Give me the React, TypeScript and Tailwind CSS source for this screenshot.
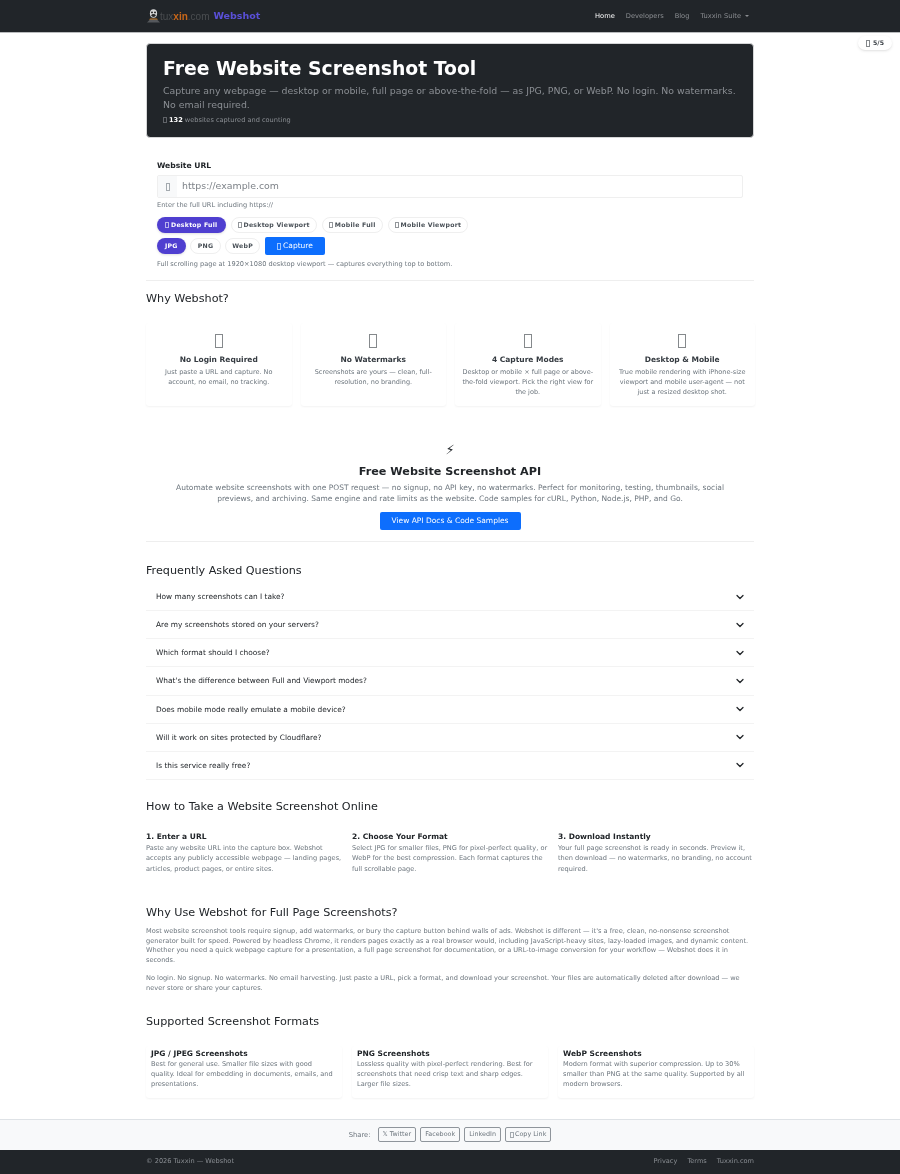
// Webshot landing page: hero, capture form, feature cards, API promo, FAQ and how-to copy.
import type { ReactNode } from "react";
import { ChevronDown } from "lucide-react";

const features = [
  { title: "No Login Required", text: "Just paste a URL and capture. No account, no email, no tracking." },
  { title: "No Watermarks", text: "Screenshots are yours — clean, full-resolution, no branding." },
  { title: "4 Capture Modes", text: "Desktop or mobile × full page or above-the-fold viewport. Pick the right view for the job." },
  { title: "Desktop & Mobile", text: "True mobile rendering with iPhone-size viewport and mobile user-agent — not just a resized desktop shot." },
];

const faqs = [
  "How many screenshots can I take?",
  "Are my screenshots stored on your servers?",
  "Which format should I choose?",
  "What's the difference between Full and Viewport modes?",
  "Does mobile mode really emulate a mobile device?",
  "Will it work on sites protected by Cloudflare?",
  "Is this service really free?",
];

const steps = [
  { title: "1. Enter a URL", text: "Paste any website URL into the capture box. Webshot accepts any publicly accessible webpage — landing pages, articles, product pages, or entire sites." },
  { title: "2. Choose Your Format", text: "Select JPG for smaller files, PNG for pixel-perfect quality, or WebP for the best compression. Each format captures the full scrollable page." },
  { title: "3. Download Instantly", text: "Your full page screenshot is ready in seconds. Preview it, then download — no watermarks, no branding, no account required." },
];

const formats = [
  { title: "JPG / JPEG Screenshots", text: "Best for general use. Smaller file sizes with good quality. Ideal for embedding in documents, emails, and presentations." },
  { title: "PNG Screenshots", text: "Lossless quality with pixel-perfect rendering. Best for screenshots that need crisp text and sharp edges. Larger file sizes." },
  { title: "WebP Screenshots", text: "Modern format with superior compression. Up to 30% smaller than PNG at the same quality. Supported by all modern browsers." },
];

// Missing-glyph box: the emoji in the original page render as empty rectangles.
function Tofu({ className }: { className: string }) {
  return <span className={`inline-block border border-current opacity-60 ${className}`} />;
}

function Pill({ children, active, className = "px-[6px]" }: { children: ReactNode; active?: boolean; className?: string }) {
  return (
    <span
      className={
        active
          ? `flex h-[16px] items-center gap-[2px] rounded-full bg-[#4f3fd0] text-[6.2px] font-bold tracking-[0.25px] text-white shadow-sm ${className}`
          : `flex h-[16px] items-center gap-[2px] rounded-full border border-[#efefef] bg-white text-[6.2px] font-bold tracking-[0.25px] text-[#495057] ${className}`
      }
    >
      {children}
    </span>
  );
}

function SectionTitle({ children, className }: { children: string; className: string }) {
  return <h2 className={`text-[11.2px] leading-[15px] text-[#212529] ${className}`}>{children}</h2>;
}

export default function App() {
  return (
    <div className="relative min-h-[1174px] bg-white font-['DejaVu_Sans',sans-serif] text-[#212529] antialiased will-change-transform">
      <nav className="h-[33px] border-b border-[#b9bbbd] bg-[#212529]">
        <div className="mx-auto flex h-[32px] w-[608px] items-center justify-between">
          <div className="flex items-center">
            <svg width="15" height="16" viewBox="0 0 15 16" className="mr-[-1px]">
              <ellipse cx="7.5" cy="5.5" rx="3.6" ry="4.2" fill="#d8d8d8" />
              <ellipse cx="7.5" cy="7.5" rx="2.2" ry="1.4" fill="#2b2b2b" />
              <circle cx="6" cy="4.4" r="0.9" fill="#111111" />
              <circle cx="9" cy="4.4" r="0.9" fill="#111111" />
              <rect x="3.5" y="10.5" width="8" height="1.8" rx="0.9" fill="#c9761d" />
              <path d="M1 14.5l3-3h7l3 3z" fill="#55585c" />
            </svg>
            <span className="font-['Liberation_Sans',sans-serif] text-[10px] text-[#4a4d50] blur-[0.3px]">
              tux<span className="font-bold text-[#c8671a]">xin</span>.com
            </span>
            <span className="ml-[4px] text-[9.5px] font-bold text-[#5a50d8]">Webshot</span>
          </div>
          <div className="mr-[5px] flex items-center gap-[11px] text-[6.7px] text-[#8b8e92]">
            <span className="text-white">Home</span>
            <span>Developers</span>
            <span>Blog</span>
            <span className="flex items-center gap-[4px]">
              Tuxxin Suite
              <span className="h-0 w-0 border-x-[2px] border-t-[2px] border-x-transparent border-t-[#8b8e92]" />
            </span>
          </div>
        </div>
      </nav>

      <div className="absolute right-[8px] top-[36px] flex h-[14px] w-[34px] items-center justify-center gap-[3px] rounded-full bg-white text-[6.2px] font-bold text-[#343a40] shadow-sm">
        <Tofu className="h-[7px] w-[4px]" />
        5/5
      </div>

      <main className="mx-auto w-[608px] pt-[10px]">
        <section className="h-[95px] rounded-[4px] border border-[#d5d6d7] bg-[#212529] px-[16px] pt-[12px]">
          <h1 className="text-[18.8px] font-bold leading-[26px] text-white">Free Website Screenshot Tool</h1>
          <p className="mt-[2px] text-[9.4px] leading-[14px] text-[#8a8e93]">
            Capture any webpage — desktop or mobile, full page or above-the-fold — as JPG, PNG, or WebP. No login. No watermarks. No email required.
          </p>
          <p className="mt-[3px] flex items-center gap-[2px] text-[6.6px] leading-[10px] text-[#8a8e93]">
            <Tofu className="h-[6px] w-[4px]" />
            <span>
              <b className="text-white">132</b> websites captured and counting
            </span>
          </p>
        </section>

        <section className="px-[11px] pt-[22px]">
          <label className="block text-[7.6px] font-bold leading-[11px]">Website URL</label>
          <div className="mt-[4px] flex h-[23px] items-center rounded-[2px] border border-[#efefef] text-[9.4px] text-[#7d8288]">
            <span className="flex h-full w-[19px] items-center justify-center bg-[#f8f9fa] text-[#6c757d]">
              <Tofu className="h-[8px] w-[4px]" />
            </span>
            <span className="ml-[5px]">https://example.com</span>
          </div>
          <p className="mt-[2px] text-[6.6px] leading-[11px] text-[#6c757d]">Enter the full URL including https://</p>
          <div className="mt-[6px] flex gap-[5px]">
            <Pill active className="px-[8px]"><Tofu className="h-[6px] w-[4px]" /> Desktop Full</Pill>
            <Pill><Tofu className="h-[6px] w-[4px]" /> Desktop Viewport</Pill>
            <Pill><Tofu className="h-[6px] w-[4px]" /> Mobile Full</Pill>
            <Pill><Tofu className="h-[6px] w-[4px]" /> Mobile Viewport</Pill>
          </div>
          <div className="mt-[4px] flex items-center gap-[4px]">
            <Pill active className="px-[8px]">JPG</Pill>
            <Pill className="px-[7px]">PNG</Pill>
            <Pill>WebP</Pill>
            <span className="ml-[1px] flex h-[18px] w-[60px] items-center justify-center gap-[2px] rounded-[2px] bg-[#0d6efd] text-[7.5px] text-white">
              <Tofu className="h-[7px] w-[4px]" /> Capture
            </span>
          </div>
          <p className="mt-[4px] text-[6.6px] leading-[11px] text-[#6c757d]">
            Full scrolling page at 1920×1080 desktop viewport — captures everything top to bottom.
          </p>
        </section>

        <hr className="mt-[10px] border-[#eeeeee]" />

        <SectionTitle className="mt-[10px]">Why Webshot?</SectionTitle>
        <div className="mt-[17px] grid w-[609px] grid-cols-4 gap-[9px]">
          {features.map((f) => (
            <div key={f.title} className="h-[83px] rounded-[3px] bg-white px-[6px] pt-[11px] text-center shadow-[0_1px_2px_rgba(0,0,0,0.05)]">
              <div className="flex h-[15px] justify-center text-[#343a40]">
                <Tofu className="h-[14px] w-[8px]" />
              </div>
              <h3 className="mt-[5px] text-[7.5px] font-bold leading-[12px] text-[#343a40]">{f.title}</h3>
              <p className="mt-[1px] text-[6.5px] leading-[10px] text-[#6c757d]">{f.text}</p>
            </div>
          ))}
        </div>

        <section className="pt-[36px] text-center">
          <div className="text-[13px] leading-[16px]">⚡</div>
          <h2 className="mt-[6px] text-[11.2px] font-bold leading-[16px]">Free Website Screenshot API</h2>
          <p className="mt-[3px] px-[20px] text-[7.5px] leading-[10.5px] text-[#6c757d]">
            Automate website screenshots with one POST request — no signup, no API key, no watermarks. Perfect for monitoring, testing, thumbnails, social previews, and archiving. Same engine and rate limits as the website. Code samples for cURL, Python, Node.js, PHP, and Go.
          </p>
          <span className="mx-auto mt-[8px] flex h-[18px] w-[141px] items-center justify-center rounded-[2px] bg-[#0d6efd] text-[7.5px] text-white">
            View API Docs & Code Samples
          </span>
        </section>

        <hr className="mt-[11px] border-[#eeeeee]" />

        <SectionTitle className="mt-[21px]">Frequently Asked Questions</SectionTitle>
        <div className="mt-[5px]">
          {faqs.map((q) => (
            <div key={q} className="flex h-[28.15px] items-center justify-between border-b border-[#f3f3f3] pl-[10px] pr-[8px] text-[7.4px] text-[#212529]">
              {q}
              <ChevronDown size={12} strokeWidth={2.5} />
            </div>
          ))}
        </div>

        <SectionTitle className="mt-[19px]">How to Take a Website Screenshot Online</SectionTitle>
        <div className="mt-[17px] grid grid-cols-3 gap-[10px]">
          {steps.map((s) => (
            <div key={s.title}>
              <h3 className="text-[7.5px] font-bold leading-[11px]">{s.title}</h3>
              <p className="mt-[1px] text-[6.6px] leading-[10.3px] text-[#6c757d]">{s.text}</p>
            </div>
          ))}
        </div>

        <SectionTitle className="mt-[31px]">Why Use Webshot for Full Page Screenshots?</SectionTitle>
        <p className="mt-[7px] text-[6.6px] leading-[9.8px] text-[#6c757d]">
          Most website screenshot tools require signup, add watermarks, or bury the capture button behind walls of ads. Webshot is different — it's a free, clean, no-nonsense screenshot generator built for speed. Powered by headless Chrome, it renders pages exactly as a real browser would, including JavaScript-heavy sites, lazy-loaded images, and dynamic content. Whether you need a quick webpage capture for a presentation, a full page screenshot for documentation, or a URL-to-image conversion for your workflow — Webshot does it in seconds.
        </p>
        <p className="mt-[8px] text-[6.6px] leading-[9.8px] text-[#6c757d]">
          No login. No signup. No watermarks. No email harvesting. Just paste a URL, pick a format, and download your screenshot. Your files are automatically deleted after download — we never store or share your captures.
        </p>

        <SectionTitle className="mt-[20px]">Supported Screenshot Formats</SectionTitle>
        <div className="mt-[17px] grid grid-cols-3 gap-[10px]">
          {formats.map((f) => (
            <div key={f.title} className="h-[52px] rounded-[3px] bg-white px-[5px] pt-[3px] shadow-[0_1px_2px_rgba(0,0,0,0.05)]">
              <h3 className="text-[7.5px] font-bold leading-[10px]">{f.title}</h3>
              <p className="text-[6.6px] leading-[10px] text-[#6c757d]">{f.text}</p>
            </div>
          ))}
        </div>
      </main>

      <div className="mt-[21px] flex h-[31px] items-center justify-center gap-[4px] border-t border-[#dee2e6] bg-[#f8f9fa] text-[6.4px] text-[#6c757d]">
        <span className="mr-[3px] text-[6.8px]">Share:</span>
        <span className="flex h-[15px] items-center rounded-[2px] border border-[#8f959b] px-[4px]">𝕏 Twitter</span>
        <span className="flex h-[15px] items-center rounded-[2px] border border-[#8f959b] px-[4px]">Facebook</span>
        <span className="flex h-[15px] items-center rounded-[2px] border border-[#8f959b] px-[4px]">LinkedIn</span>
        <span className="flex h-[15px] items-center gap-[1px] rounded-[2px] border border-[#8f959b] px-[4px]">
          <Tofu className="h-[6px] w-[4px]" /> Copy Link
        </span>
      </div>
      <footer className="h-[24px] bg-[#212529]">
        <div className="mx-auto flex h-full w-[608px] items-center justify-between text-[6.6px] text-[#8a8e93]">
          <span>© 2026 Tuxxin — Webshot</span>
          <span className="flex gap-[10px]">
            <span>Privacy</span>
            <span>Terms</span>
            <span>Tuxxin.com</span>
          </span>
        </div>
      </footer>
    </div>
  );
}
